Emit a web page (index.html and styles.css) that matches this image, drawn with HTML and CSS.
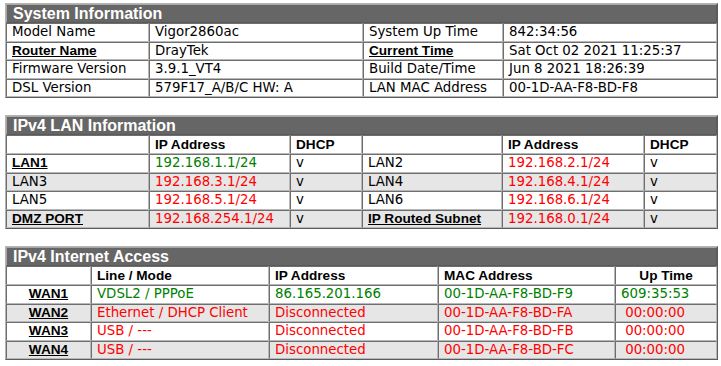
FILE: index.html
```html
<!DOCTYPE html>
<html>
<head>
<meta charset="utf-8">
<title>Dashboard</title>
<link rel="stylesheet" href="styles.css">
</head>
<body>
<div class="page">
<table class="info t1">
  <colgroup><col class="c1a"><col class="c1b"><col class="c1c"><col class="c1d"></colgroup>
  <tr><th class="title" colspan="4">System Information</th></tr>
  <tr><td>Model Name</td><td>Vigor2860ac</td><td>System Up Time</td><td>842:34:56</td></tr>
  <tr><td><a class="lnk" href="#">Router Name</a></td><td>DrayTek</td><td><a class="lnk" href="#">Current Time</a></td><td>Sat Oct 02 2021 11:25:37</td></tr>
  <tr><td>Firmware Version</td><td>3.9.1_VT4</td><td>Build Date/Time</td><td>Jun 8 2021 18:26:39</td></tr>
  <tr><td>DSL Version</td><td>579F17_A/B/C HW: A</td><td>LAN MAC Address</td><td>00-1D-AA-F8-BD-F8</td></tr>
</table>

<table class="info t2">
  <colgroup><col class="c2a"><col class="c2b"><col class="c2c"><col class="c2d"><col class="c2e"><col class="c2f"></colgroup>
  <tr><th class="title" colspan="6">IPv4 LAN Information</th></tr>
  <tr class="head"><td></td><td>IP Address</td><td>DHCP</td><td></td><td>IP Address</td><td>DHCP</td></tr>
  <tr><td><a class="lnk" href="#">LAN1</a></td><td class="ok">192.168.1.1/24</td><td>v</td><td>LAN2</td><td class="bad">192.168.2.1/24</td><td>v</td></tr>
  <tr class="alt"><td>LAN3</td><td class="bad">192.168.3.1/24</td><td>v</td><td>LAN4</td><td class="bad">192.168.4.1/24</td><td>v</td></tr>
  <tr><td>LAN5</td><td class="bad">192.168.5.1/24</td><td>v</td><td>LAN6</td><td class="bad">192.168.6.1/24</td><td>v</td></tr>
  <tr class="alt"><td><a class="lnk" href="#">DMZ PORT</a></td><td class="bad">192.168.254.1/24</td><td>v</td><td><a class="lnk" href="#">IP Routed Subnet</a></td><td class="bad">192.168.0.1/24</td><td>v</td></tr>
</table>

<table class="info t3">
  <colgroup><col class="c3a"><col class="c3b"><col class="c3c"><col class="c3d"><col class="c3e"></colgroup>
  <tr><th class="title" colspan="5">IPv4 Internet Access</th></tr>
  <tr class="head"><td></td><td>Line / Mode</td><td>IP Address</td><td>MAC Address</td><td class="center">Up Time</td></tr>
  <tr><td class="center"><a class="lnk" href="#">WAN1</a></td><td class="ok">VDSL2 / PPPoE</td><td class="ok">86.165.201.166</td><td class="ok">00-1D-AA-F8-BD-F9</td><td class="ok up">609:35:53</td></tr>
  <tr class="alt"><td class="center"><a class="lnk" href="#">WAN2</a></td><td class="bad">Ethernet / DHCP Client</td><td class="bad">Disconnected</td><td class="bad">00-1D-AA-F8-BD-FA</td><td class="bad up">00:00:00</td></tr>
  <tr><td class="center"><a class="lnk" href="#">WAN3</a></td><td class="bad">USB / ---</td><td class="bad">Disconnected</td><td class="bad">00-1D-AA-F8-BD-FB</td><td class="bad up">00:00:00</td></tr>
  <tr class="alt"><td class="center"><a class="lnk" href="#">WAN4</a></td><td class="bad">USB / ---</td><td class="bad">Disconnected</td><td class="bad">00-1D-AA-F8-BD-FC</td><td class="bad up">00:00:00</td></tr>
</table>
</div>
</body>
</html>
```

FILE: styles.css
```css
html, body {
  margin: 0;
  padding: 0;
  background: #ffffff;
}

.page {
  padding: 3px 5px 0 5px;
  display: flex;
  flex-direction: column;
  gap: 17px;
}

.info {
  width: 711px;
  table-layout: fixed;
  border-collapse: separate;
  border-spacing: 0;
  border: 1px solid;
  border-color: #b4b4b4 #5c5c5c #5c5c5c #b4b4b4;
  font-family: "DejaVu Sans", Verdana, sans-serif;
  font-size: 13.33px;
  color: #000000;
}

.info td,
.info th {
  border: 1px solid;
  border-color: #6e6e6e #b8b8b8 #b8b8b8 #6e6e6e;
  padding: 0 5px;
  line-height: 16.5px;
  text-align: left;
  white-space: nowrap;
  overflow: hidden;
}

.info th.title {
  background: #666666;
  color: #ffffff;
  font-family: "Liberation Sans", Arial, sans-serif;
  font-weight: bold;
  font-size: 16px;
  line-height: 17px;
  padding-left: 6px;
  border-color: #a8a8a8 #5a5a5a #5a5a5a #a8a8a8;
}

.info tr.head td {
  font-family: "Liberation Sans", Arial, sans-serif;
  font-weight: bold;
  font-size: 13.6px;
  line-height: 17px;
}

.info tr.alt td {
  background: #e6e6e6;
}

.lnk {
  font-family: "Liberation Sans", Arial, sans-serif;
  font-weight: bold;
  font-size: 13.6px;
  color: #000000;
  text-decoration: underline;
}

.ok { color: #008000; }
.bad { color: #ff0000; }
.center { text-align: center !important; }
.info td.up { text-align: right; padding-right: 31px; }

.c1a { width: 143px; }
.c1b { width: 214px; }
.c1c { width: 140px; }
.c1d { width: 214px; }

.c2a { width: 143px; }
.c2b { width: 141px; }
.c2c { width: 72px; }
.c2d { width: 140px; }
.c2e { width: 142px; }
.c2f { width: 73px; }

.c3a { width: 85px; }
.c3b { width: 178px; }
.c3c { width: 169px; }
.c3d { width: 177px; }
.c3e { width: 102px; }
```
